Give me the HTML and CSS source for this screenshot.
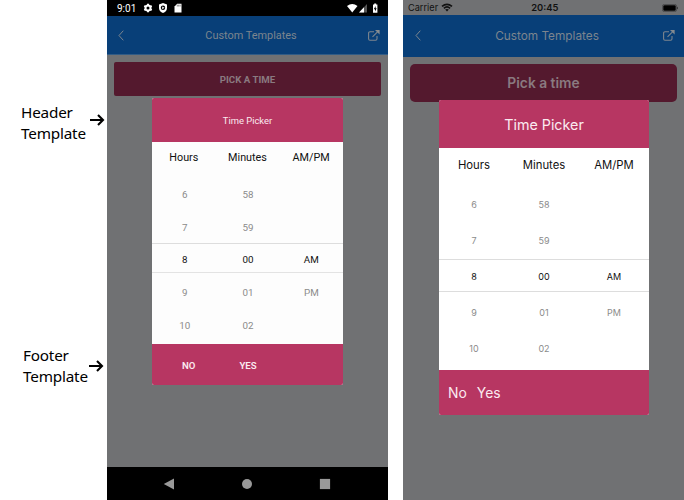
FILE: index.html
```html
<!DOCTYPE html>
<html lang="en">
<head>
<meta charset="utf-8">
<title>Custom Templates</title>
<link rel="stylesheet" href="styles.css">
</head>
<body>
<main class="board">
  <aside class="notes">
    <div class="note note-header">
      <span>Header<br>Template</span>
      <svg class="arrow" viewBox="0 0 15 12"><path d="M0 6H13M8 1L13 6L8 11"/></svg>
    </div>
    <div class="note note-footer">
      <span>Footer<br>Template</span>
      <svg class="arrow" viewBox="0 0 15 12"><path d="M0 6H13M8 1L13 6L8 11"/></svg>
    </div>
  </aside>

  <section class="phone android">
    <div class="status">
      <span class="clock">9:01</span>
      <svg class="status-left" viewBox="0 0 40 12" width="40" height="12">
        <g fill="none" stroke="#fff"><circle cx="5" cy="6" r="2.5" stroke-width="2"/><path stroke-width="2" d="M5 1.700V3M5 9V10.300M1.300 3.900L2.400 4.500M7.600 7.500L8.700 8.100M1.300 8.100L2.400 7.500M7.600 4.500L8.700 3.900"/></g>
        <path fill="#fff" d="M20 1L24 2.600V6C24 8.400 22.200 10.400 20 11C17.800 10.400 16 8.400 16 6V2.600Z"/>
        <circle cx="20" cy="5.800" r="2.200" fill="#000"/><path fill="#fff" d="M19.200 4.400L21.600 5.800L19.200 7.200Z"/>
        <path fill="#fff" d="M34.200 1.800H38.500V10.500H31.500V4.500Z"/><path stroke="#555" stroke-width=".7" d="M34.300 2.700V4.500M35.700 2.700V4.500M37.100 2.700V4.500"/>
      </svg>
      <svg class="status-right" viewBox="0 0 32 12" width="32" height="12">
        <path fill="#fff" d="M0 4Q5.200 0 10.500 4L5.250 10.500Z"/>
        <path fill="#555" d="M20 2V10.500H12Z"/><path fill="#fff" d="M17 5.200V10.500H12Z"/>
        <path fill="#fff" d="M26 2.600H27.200V1.500H29.200V2.600H30.400V10.800H26Z"/><path fill="#000" d="M28.600 4L26.800 7.200H28V9.500L29.700 6.200H28.600Z"/>
      </svg>
    </div>
    <header class="bar">
      <svg class="back" viewBox="0 0 6 11"><path d="M5.300 .7L1 5.500L5.300 10.300"/></svg>
      <h1><span>Custom Templates</span></h1>
      <svg class="open" viewBox="0 0 12 11"><path d="M6 1.800H2Q.6 1.800 .6 3.200V8.800Q.6 10.200 2 10.200H7.600Q9 10.200 9 8.800V6M4.500 6.800L10 1.400"/><path class="tip" d="M7 0H11.600V4.600Z"/></svg>
    </header>
    <div class="content"><button class="pick">PICK A TIME</button></div>
    <nav class="system">
      <svg viewBox="0 0 12 12"><path d="M11 .6V11.400L.8 6Z"/></svg>
      <svg viewBox="0 0 12 12"><circle cx="6" cy="6" r="5"/></svg>
      <svg viewBox="0 0 12 12"><rect x=".9" y=".9" width="10.200" height="10.200"/></svg>
    </nav>
    <div class="dialog">
      <div class="dialog-header"><span>Time Picker</span></div>
      <div class="labels"><span>Hours</span><span>Minutes</span><span>AM/PM</span></div>
      <div class="spinner">
        <div class="row"><span>6</span><span>58</span><span></span></div>
        <div class="row"><span>7</span><span>59</span><span></span></div>
        <div class="row selected"><span>8</span><span>00</span><span>AM</span></div>
        <div class="row"><span>9</span><span>01</span><span>PM</span></div>
        <div class="row"><span>10</span><span>02</span><span></span></div>
      </div>
      <div class="dialog-footer"><span>NO</span><span>YES</span></div>
    </div>
  </section>

  <section class="phone ios">
    <div class="status">
      <span class="carrier">Carrier</span>
      <svg class="wifi" viewBox="0 0 12 9"><path d="M1 3.400Q6 -.8 11 3.400M2.900 5.300Q6 2.600 9.100 5.300"/><path class="dot" d="M4.200 6.600Q6 5.400 7.800 6.600L6 8.500Z"/></svg>
      <span class="clock">20:45</span>
      <svg class="battery" viewBox="0 0 17 8"><rect x=".4" y=".4" width="14.200" height="7.200" rx="2" fill="none" stroke="#3c3d3f" stroke-width=".7"/><rect x="1.300" y="1.300" width="12.400" height="5.400" rx="1.200"/><path d="M15.300 2.700Q16.800 4 15.300 5.300Z"/></svg>
    </div>
    <header class="bar">
      <svg class="back" viewBox="0 0 6 11"><path d="M5.300 .7L1 5.500L5.300 10.300"/></svg>
      <h1><span>Custom Templates</span></h1>
      <svg class="open" viewBox="0 0 12 11"><path d="M6 1.800H2Q.6 1.800 .6 3.200V8.800Q.6 10.200 2 10.200H7.600Q9 10.200 9 8.800V6M4.500 6.800L10 1.400"/><path class="tip" d="M7 0H11.600V4.600Z"/></svg>
    </header>
    <div class="content"><button class="pick">Pick a time</button></div>
    <div class="dialog">
      <div class="dialog-header"><span>Time Picker</span></div>
      <div class="labels"><span>Hours</span><span>Minutes</span><span>AM/PM</span></div>
      <div class="spinner">
        <div class="row"><span>6</span><span>58</span><span></span></div>
        <div class="row"><span>7</span><span>59</span><span></span></div>
        <div class="row selected"><span>8</span><span>00</span><span>AM</span></div>
        <div class="row"><span>9</span><span>01</span><span>PM</span></div>
        <div class="row"><span>10</span><span>02</span><span></span></div>
      </div>
      <div class="dialog-footer"><span>No</span><span>Yes</span></div>
    </div>
  </section>
</main>
</body>
</html>
```

FILE: styles.css
```css
* { box-sizing: border-box; }
body { margin: 0; background: #fff; overflow: hidden; }
svg { display: block; flex: none; }
.board { display: grid; grid-template-columns: 107px 281px 281px; column-gap: 0; width: 684px; height: 500px; }
.board { grid-template-columns: 107px 281px 296px; }
.ios { margin-left: 15px; }

.notes { font: 15.3px/21px "Noto Sans", "Open Sans", sans-serif; color: #000; padding-top: 102px; letter-spacing: -.2px; }
.note { display: flex; align-items: center; justify-content: space-between; height: 42px; padding: 0 2px 0 21px; }
.note-header { margin-bottom: 201px; }
.note-footer { padding-left: 23px; padding-right: 3px; }
.note-footer span { margin-right: -2px; }
.arrow { width: 15px; height: 12px; fill: none; stroke: #000; stroke-width: 2.1; }
.note-header .arrow { margin-top: -7px; }
.note-footer .arrow { margin-top: -1px; }

.phone { position: relative; display: flex; flex-direction: column; height: 500px; background: #707173; overflow: hidden; }
.android { font-family: Roboto, sans-serif; }
.ios { font-family: Inter, sans-serif; }
.status { display: flex; align-items: center; flex: none; }
.android .status { height: 16px; background: #000; color: #fff; font-size: 10px; padding: 0 9px 0 10px; }
.status-left { margin-left: 7px; }
.status-right { margin-left: auto; }
.ios .status { height: 15px; color: #111; font-size: 9.2px; padding: 0 5px; }
.wifi { width: 12px; height: 9px; margin-left: 3px; fill: none; stroke: #111; stroke-width: 1.7; }
.wifi .dot { fill: #111; stroke: none; }
.ios .clock { margin-left: 78px; font-weight: 600; font-size: 9.4px; }
.battery { width: 17px; height: 8px; margin-left: auto; }

.bar { display: flex; align-items: center; flex: none; background: #083f78; color: #7c858e; }
.android .bar { height: 39px; padding: 0 8px 0 11px; border-bottom: 1px solid #315c86; }
.ios .bar { height: 42px; padding: 0 9px 1px 12px; }
.bar h1 { flex: 1; margin: 0; text-align: center; font-weight: 400; font-size: 10.9px; padding-left: 10px; padding-top: 1px; }
.ios .bar h1 { font-size: 11.8px; padding-top: 0; }
.back { width: 6px; height: 11px; fill: none; stroke: #7c858e; stroke-width: 1; }
.open { width: 12px; height: 11px; fill: none; stroke: #7c858e; stroke-width: 1.1; }
.open .tip { fill: #858b90; stroke: none; }

.content { flex: 1; padding: 7px; }
.pick { display: block; width: 100%; border: 0; padding: 0; background: #54192e; color: #8a7a80; font-family: inherit; }
.android .pick { height: 34px; border-radius: 2px; font-size: 9.7px; font-weight: 700; }
.ios .pick { height: 38px; border-radius: 5px; font-size: 13.8px; font-weight: 600; }
.system { display: flex; align-items: center; justify-content: space-between; height: 33px; padding: 0 57px 0 56px; background: #000; }
.system svg { width: 12px; height: 12px; fill: #999; }

.dialog { position: absolute; display: flex; flex-direction: column; background: #fff; overflow: hidden; }
.android .dialog { left: 45px; top: 98px; width: 191px; height: 287px; border-radius: 2px; background: #fdfdfd; }
.ios .dialog { left: 36px; top: 100px; width: 210px; height: 315px; border-radius: 2px; }
.dialog-header, .dialog-footer { display: flex; align-items: center; flex: none; background: #b73662; color: #fbeaf0; }
.dialog-header { justify-content: center; }
.android .dialog-header { height: 44px; font-size: 9.4px; }
.ios .dialog-header { height: 48px; font-size: 14.3px; padding-top: 1px; }
.labels, .row { display: grid; grid-template-columns: repeat(3, 1fr); align-items: center; text-align: center; flex: none; }
.labels { color: #111; }
.android .labels { height: 36px; font-size: 10.8px; padding-bottom: 5px; }
.ios .labels { height: 38px; font-size: 11.3px; padding-bottom: 4px; }
.row { color: #8b8b8b; }
.row.selected { color: #111; }
.android .row { height: 32.7px; font-size: 9.8px; padding-left: 1px; }
.android .row.selected { height: 30px; margin-bottom: 2.7px; padding-top: 2px; border-top: 1px solid #ddd; border-bottom: 1px solid #e3e3e3; }
.ios .row { height: 36px; font-size: 9px; }
.ios .row.selected { height: 33px; margin: 1px 0 2px; padding-top: 2px; border-top: 1px solid #ddd; border-bottom: 1px solid #ddd; }
.dialog-footer { margin-top: auto; }
.android .dialog-footer { height: 41px; padding-left: 30px; gap: 44px; font-size: 9.6px; font-weight: 600; padding-top: 1px; }
.ios .dialog-footer { height: 45px; padding-left: 9px; gap: 10px; font-size: 13.9px; }
```
